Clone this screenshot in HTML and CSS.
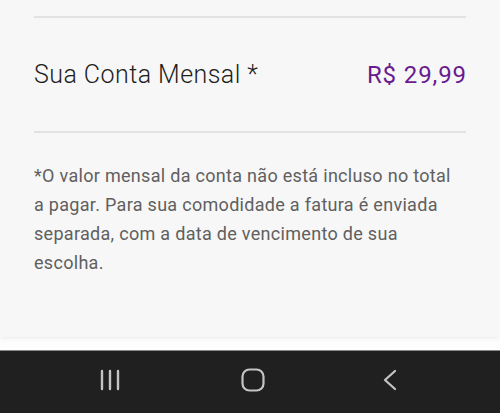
FILE: index.html
```html
<!DOCTYPE html>
<html lang="pt-BR">
<head>
<meta charset="utf-8">
<link rel="stylesheet" href="styles.css">
</head>
<body>
<main class="card">
  <div class="divider first"></div>
  <div class="row">
    <span class="label">Sua Conta Mensal *</span>
    <span class="price">R$ 29,99</span>
  </div>
  <div class="divider"></div>
  <p class="note">*O valor mensal da conta não está incluso no total a pagar. Para sua comodidade a fatura é enviada separada, com a data de vencimento de sua escolha.</p>
</main>
<nav class="navbar">
  <svg class="ico" width="24" height="22" viewBox="0 0 24 22"><g stroke="#c4c4c4" stroke-width="2.4" stroke-linecap="round"><line x1="3" y1="2" x2="3" y2="20"/><line x1="11" y1="2" x2="11" y2="20"/><line x1="19" y1="2" x2="19" y2="20"/></g></svg>
  <svg class="ico" width="24" height="24" viewBox="0 0 24 24"><rect x="1.5" y="1.5" width="21" height="21" rx="7" fill="none" stroke="#c4c4c4" stroke-width="2.2"/></svg>
  <svg class="ico" width="16" height="22" viewBox="0 0 16 22"><polyline points="13,2 3,11 13,20" fill="none" stroke="#c4c4c4" stroke-width="2.3" stroke-linecap="round" stroke-linejoin="round"/></svg>
</nav>
</body>
</html>
```

FILE: styles.css
```css
html, body {
  margin: 0;
  padding: 0;
  background: #fdfdfd;
}
body {
  width: 500px;
  height: 413px;
  overflow: hidden;
  display: flex;
  flex-direction: column;
  font-family: Roboto, "Noto Sans", sans-serif;
}
.card {
  height: 337px;
  box-sizing: border-box;
  background: #f7f7f7;
  padding: 0 34px;
  box-shadow: 0 2px 4px rgba(0,0,0,0.06);
  flex-shrink: 0;
}
.divider {
  height: 2px;
  background: #e2e2e2;
}
.divider.first {
  margin-top: 16px;
}
.row {
  height: 113px;
  display: flex;
  align-items: center;
  justify-content: space-between;
}
.label {
  font-size: 25px;
  font-weight: 300;
  color: #1e1e1e;
  line-height: 30px;
  letter-spacing: 0.45px;
}
.price {
  font-size: 24px;
  font-weight: 400;
  color: #6a1b8f;
  line-height: 30px;
  letter-spacing: 0.9px;
  margin-right: -1px;
}
.note {
  margin: 28px 0 0;
  padding-right: 12px;
  font-size: 18px;
  line-height: 29px;
  color: #606060;
  letter-spacing: 0.3px;
}
.navbar {
  margin-top: 13px;
  flex: 1;
  background: #202020;
  border-top: 1px solid #8a8a8a;
  display: flex;
  align-items: center;
  justify-content: space-between;
  padding: 0 102px 4px 99px;
}
.ico {
  display: block;
}
```
